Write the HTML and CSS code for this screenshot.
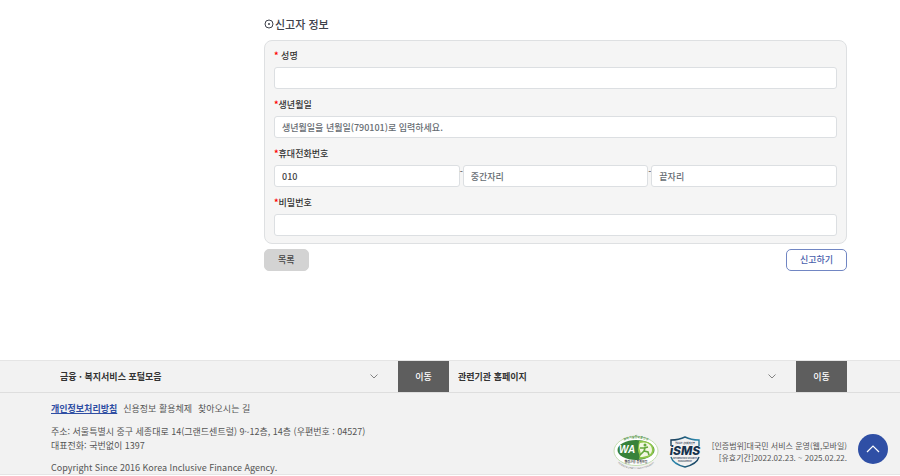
FILE: index.html
```html
<!DOCTYPE html>
<html lang="ko">
<head>
<meta charset="utf-8">
<meta name="viewport" content="width=device-width, initial-scale=1">
<title>신고자 정보</title>
<link rel="stylesheet" href="styles.css">
</head>
<body>
<main class="content">
  <h1 class="title"><svg class="title-icon" viewBox="0 0 10 10" aria-hidden="true"><circle cx="5" cy="5" r="4" fill="none" stroke="currentColor"/><circle cx="5" cy="5" r="1" fill="currentColor"/></svg>신고자 정보</h1>
  <form>
    <div class="panel">
      <div class="field">
        <label class="label" for="name"><span class="required">*</span> 성명</label>
        <input class="input" id="name" type="text">
      </div>
      <div class="field">
        <label class="label" for="birth"><span class="required">*</span>생년월일</label>
        <input class="input" id="birth" type="text" placeholder="생년월일을 년월일(790101)로 입력하세요.">
      </div>
      <div class="field">
        <label class="label" for="phone"><span class="required">*</span>휴대전화번호</label>
        <div class="phone">
          <input class="input" id="phone" type="text" value="010">
          <span class="dash">-</span>
          <input class="input" type="text" placeholder="중간자리" aria-label="중간자리">
          <span class="dash">-</span>
          <input class="input" type="text" placeholder="끝자리" aria-label="끝자리">
        </div>
      </div>
      <div class="field">
        <label class="label" for="password"><span class="required">*</span>비밀번호</label>
        <input class="input" id="password" type="password">
      </div>
    </div>
    <div class="actions">
      <button class="button button-list" type="button">목록</button>
      <button class="button button-submit" type="submit">신고하기</button>
    </div>
  </form>
</main>
<footer class="footer">
  <div class="sites">
    <div class="site">
      <select class="site-select" aria-label="금융 · 복지서비스 포털모음"><option>금융 · 복지서비스 포털모음</option></select>
      <button class="go" type="button">이동</button>
    </div>
    <div class="site">
      <select class="site-select" aria-label="관련기관 홈페이지"><option>관련기관 홈페이지</option></select>
      <button class="go" type="button">이동</button>
    </div>
  </div>
  <div class="info">
    <div class="company">
      <nav class="links">
        <a class="link link-privacy" href="#">개인정보처리방침</a>
        <a class="link" href="#">신용정보 활용체제</a>
        <a class="link" href="#">찾아오시는 길</a>
      </nav>
      <address class="address">주소: 서울특별시 중구 세종대로 14(그랜드센트럴) 9~12층, 14층 (우편번호 : 04527)<br>대표전화: 국번없이 1397</address>
      <p class="copyright">Copyright Since 2016 Korea Inclusive Finance Agency.</p>
    </div>
    <div class="marks">
      <svg class="mark-wa" viewBox="0 0 46 34" role="img" aria-label="WA 웹 접근성 인증">
        <defs>
          <path id="wa-top" d="M4 10Q23 -4 42 10"/>
          <path id="wa-bottom" d="M0 22Q7 34 23 34Q39 34 46 22"/>
        </defs>
        <ellipse cx="23" cy="16" rx="22" ry="14.500" fill="#fff" stroke="#c6dfb3"/>
        <ellipse cx="23" cy="15" rx="18.500" ry="10" fill="#37823a"/>
        <path d="M26 6C34 5 41 9 41 15S34 24 26 24C28 20 24 17 25 13z" fill="#8fc74a"/>
        <path d="M27 8C34 6 39 10 39 15S33 22 27 22C30 18 24 13 27 8z" fill="#f2f7e2"/>
        <circle cx="32" cy="10" r="1.500" fill="#64a83c"/>
        <path d="M27 13l4 0 4-1M32 13l-1 3-4 4M31 16l4 1 1 3" fill="none" stroke="#64a83c" stroke-width="1.600"/>
        <text x="6" y="18" class="wa-name">WA</text>
        <text class="wa-ring-top" text-anchor="middle"><textPath href="#wa-top" startOffset="50%">과학기술정보통신부</textPath></text>
        <text x="23" y="28" text-anchor="middle" class="wa-label">웹접근성 품질인증</text>
        <text class="wa-ring" text-anchor="middle"><textPath href="#wa-bottom" startOffset="50%">한국웹접근성인증평가원 WEB ACCESSIBILITY</textPath></text>
      </svg>
      <svg class="mark-isms" viewBox="0 0 34 32" role="img" aria-label="ISMS 정보보호 관리체계 인증">
        <defs><linearGradient id="shield" x1="0" y1="0" x2="1" y2="1"><stop offset="0" stop-color="#17324d"/><stop offset=".5" stop-color="#2b88ad"/><stop offset="1" stop-color="#17324d"/></linearGradient></defs>
        <path d="M3 10V4Q11 4 17 1Q23 4 31 4V10M3 21Q5 28 17 31Q29 28 31 21" fill="none" stroke="url(#shield)" stroke-width="1.400"/>
        <text x="17" y="8" text-anchor="middle" class="isms-small">정보보호 관리체계 인증</text>
        <text x="17" y="19" text-anchor="middle" class="isms-name">iSMS</text>
        <text x="17" y="23" text-anchor="middle" class="isms-small">INFORMATION SECURITY</text>
        <text x="17" y="26" text-anchor="middle" class="isms-small">MANAGEMENT</text>
      </svg>
      <p class="certificate">[인증범위]대국민 서비스 운영(웹,모바일)<br>[유효기간]2022.02.23. ~ 2025.02.22.</p>
    </div>
  </div>
</footer>
<button class="to-top" type="button" aria-label="맨 위로"><svg viewBox="0 0 30 30" aria-hidden="true"><path d="M9 18l6-6 6 6" fill="none" stroke="#fff" stroke-width="1.200"/></svg></button>
</body>
</html>
```

FILE: styles.css
```css
* { box-sizing: border-box; }

body {
  margin: 0;
  background: #fff;
  color: #444;
  font: 400 9px/14px "Noto Sans CJK KR", sans-serif;
}

input, button, select { font: inherit; color: inherit; }

.content { padding: 16px 53px 89px 264px; }

.title {
  display: flex;
  align-items: center;
  gap: 1px;
  margin: 0 0 8px;
  color: #3d404a;
  font-size: 11px;
  font-weight: 500;
  line-height: 16px;
}
.title-icon { width: 10px; height: 10px; }

.panel {
  display: grid;
  gap: 8px;
  padding: 7px 9px;
  background: #f5f5f5;
  border: 1px solid #dee0e2;
  border-radius: 8px;
}
.field { display: grid; gap: 4px; }
.label { line-height: 15px; font-weight: 500; color: #333; }
.required { color: #f00; font-weight: 700; }

.input {
  width: 100%;
  min-width: 0;
  height: 22px;
  padding: 0 7px;
  background: #fff;
  border: 1px solid #dcdfe2;
  border-radius: 3px;
  font-weight: 500;
}
.input::placeholder { color: #666c72; opacity: 1; }
.phone { display: flex; }
.phone .input { flex: 1; }
.dash { width: 3px; line-height: 14px; text-align: center; }

.actions { display: flex; justify-content: space-between; margin-top: 5px; }
.button {
  height: 22px;
  padding: 0 13px;
  border: 1px solid #d3d3d3;
  border-radius: 5px;
  font-weight: 500;
}
.button-list { background: #d3d3d3; }
.button-submit { background: #fff; border-color: #7186c3; color: #4a61ad; }

.footer {
  background: #f2f2f2;
  border-top: 1px solid #e5e5e5;
  border-bottom: 1px solid #e5e5e5;
  color: #555;
}
.sites {
  display: grid;
  grid-template-columns: 1fr 1fr;
  padding: 0 53px 0 51px;
  border-bottom: 1px solid #dedede;
}
.site { display: flex; }
.site-select {
  flex: 1;
  min-width: 0;
  height: 31px;
  padding: 0 9px;
  appearance: none;
  border: 0;
  background: url("data:image/svg+xml,%3Csvg xmlns='http://www.w3.org/2000/svg' viewBox='0 0 8 5'%3E%3Cpath d='M.5.5 4 4 7.5.5' fill='none' stroke='%23666' stroke-width='.8'/%3E%3C/svg%3E") no-repeat right 20px center / 8px 5px;
  color: #333;
  font-weight: 700;
}
.go {
  width: 51px;
  border: 0;
  background: #5e5e5e;
  color: #fff;
  font-weight: 500;
}

.info {
  display: flex;
  justify-content: space-between;
  align-items: flex-end;
  padding: 9px 53px 0 51px;
}
.links { display: flex; gap: 6px; }
.link { color: inherit; text-decoration: none; }
.link-privacy { color: #2f4ea3; font-weight: 700; text-decoration: underline; }
.address { margin: 9px 0; font-style: normal; }
.copyright { margin: 0; line-height: 12px; }

.marks { display: flex; align-items: center; padding-bottom: 5px; }
.mark-wa { width: 46px; height: 34px; margin-right: 9px; overflow: visible; }
.mark-isms { width: 34px; height: 32px; margin-right: 10px; overflow: visible; }
.certificate { margin: 0; font-size: 8px; line-height: 12px; text-align: right; }

.wa-name { font: italic 900 10px "Liberation Sans", sans-serif; fill: #fff; }
.wa-ring { font-size: 2px; fill: #777; }
.wa-ring-top { font-size: 3px; font-weight: 700; fill: #4c8d46; }
.wa-label { font-size: 3px; font-weight: 700; fill: #333; }
.isms-name { font: italic 800 12px "Inter", sans-serif; fill: #17324d; }
.isms-small { font-size: 2px; font-weight: 700; fill: #345; }

.to-top {
  position: fixed;
  right: 12px;
  bottom: 12px;
  width: 30px;
  height: 30px;
  padding: 0;
  border: 0;
  border-radius: 50%;
  background: #2f4fa5;
}
.to-top svg { display: block; }
```
